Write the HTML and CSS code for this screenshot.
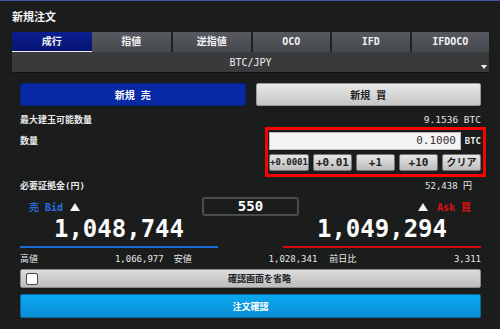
FILE: index.html
```html
<!DOCTYPE html>
<html lang="ja">
<head>
<meta charset="utf-8">
<title>新規注文</title>
<link rel="stylesheet" href="styles.css">
</head>
<body>
<div class="title">新規注文</div>
<div class="tabs">
  <div class="tab active">成行</div>
  <div class="tab">指値</div>
  <div class="tab sep">逆指値</div>
  <div class="tab sep">OCO</div>
  <div class="tab sep">IFD</div>
  <div class="tab sep">IFDOCO</div>
</div>
<div class="pair">BTC/JPY<span class="caret"></span></div>
<div class="panel">
  <div class="sides">
    <button class="btn-sell">新規 売</button>
    <button class="btn-buy">新規 買</button>
  </div>
  <div class="row r-max"><span class="lbl">最大建玉可能数量</span><span class="num">9.1536 BTC</span></div>
  <div class="qty-row">
    <span class="lbl qty-label">数量</span>
    <div class="qty-box">
      <div class="qty-input-row"><div class="qty-input">0.1000</div><span class="unit">BTC</span></div>
      <div class="qty-btns">
        <button class="sbtn tiny">+0.0001</button>
        <button class="sbtn">+0.01</button>
        <button class="sbtn">+1</button>
        <button class="sbtn">+10</button>
        <button class="sbtn clear">クリア</button>
      </div>
    </div>
  </div>
  <div class="row r-margin"><span class="lbl">必要証拠金(円)</span><span class="num pad">52,438 円</span></div>
  <div class="quote-head">
    <div class="bid-h"><span class="blue">売 Bid</span><span class="tri tri-b"></span></div>
    <div class="spread">550</div>
    <div class="ask-h"><span class="tri tri-a"></span><span class="red">Ask 買</span></div>
  </div>
  <div class="prices">
    <div class="price bid">1,048,744</div>
    <div class="price ask">1,049,294</div>
  </div>
  <div class="stats">
    <div class="stat"><span class="lbl">高値</span><span class="num">1,066,977</span></div>
    <div class="stat"><span class="lbl">安値</span><span class="num">1,028,341</span></div>
    <div class="stat last"><span class="lbl">前日比</span><span class="num">3,311</span></div>
  </div>
  <div class="skip"><span class="check"></span><span class="skip-label">確認画面を省略</span></div>
  <button class="confirm">注文確認</button>
</div>
</body>
</html>
```
FILE: styles.css
```css
* { box-sizing: border-box; }
html, body { margin: 0; padding: 0; }
body {
  width: 500px;
  height: 329px;
  overflow: hidden;
  background: #1b1c1c;
  border-top: 1px solid #3a5aa6;
  color: #e4e4e4;
  font-family: "DejaVu Sans Mono", "Noto Sans CJK JP", monospace;
  font-size: 9px;
}
button {
  font-family: inherit;
  margin: 0;
  padding: 0;
  cursor: pointer;
}
.title {
  height: 31px;
  padding: 3px 0 0 12px;
  line-height: 28px;
  font-size: 11px;
  font-weight: bold;
  color: #f4f4f4;
}
.tabs {
  margin-left: 12px;
  width: 477px;
  height: 20px;
  display: grid;
  grid-template-columns: repeat(6, 1fr);
}
.tab {
  background: linear-gradient(#56595f, #45484d);
  color: #f2f2f2;
  font-size: 10px;
  font-weight: bold;
  text-align: center;
  line-height: 20px;
}
.tab.sep { border-left: 2px solid #1f2022; }
.tab.active {
  background: linear-gradient(#0b1f8f, #071472);
  border-bottom: 2px solid #f0f0f0;
  line-height: 19px;
}
.pair {
  position: relative;
  margin-left: 12px;
  width: 477px;
  height: 21px;
  background: #393a3c;
  border-bottom: 1px solid #111;
  color: #f0f0f0;
  font-size: 10px;
  text-align: center;
  line-height: 21px;
}
.caret {
  position: absolute;
  right: 2px;
  bottom: 3px;
  width: 0;
  height: 0;
  border-left: 3.5px solid transparent;
  border-right: 3.5px solid transparent;
  border-top: 4px solid #f4f4f4;
}
.panel {
  padding: 10px 19px 0 20px;
  display: flex;
  flex-direction: column;
}
.sides {
  display: grid;
  grid-template-columns: 1fr 1fr;
  column-gap: 10px;
  height: 23px;
}
.btn-sell, .btn-buy {
  font-size: 10px;
  font-weight: bold;
  border-radius: 2px;
}
.btn-sell {
  background: #0829a6;
  border: 1px solid #0a1f7a;
  color: #fff;
}
.btn-buy {
  background: linear-gradient(#e8e8e8, #c6c6c6);
  border: 1px solid #9a9a9a;
  color: #222;
}
.row {
  display: flex;
  justify-content: space-between;
  line-height: 14px;
}
.lbl { font-weight: bold; color: #e8e8e8; }
.num { color: #e6e6e6; }
.r-max { margin-top: 7px; }
.r-max .num { font-size: 9.5px; }
.qty-row {
  display: flex;
  justify-content: space-between;
  align-items: flex-start;
}
.qty-label { margin-top: 7px; line-height: 14px; }
.qty-box {
  width: 221px;
  margin-right: -5px;
  border: 3px solid #f00;
  padding: 2px 2px 3px 1px;
}
.qty-input-row {
  display: flex;
  align-items: center;
  justify-content: space-between;
  height: 18px;
}
.qty-input {
  width: 192px;
  height: 18px;
  background: #f3f3f3;
  border: 1px solid #bbb;
  color: #333;
  font-size: 11px;
  line-height: 16px;
  text-align: right;
  padding-right: 4px;
}
.unit { font-size: 9px; font-weight: bold; color: #eee; }
.qty-btns {
  margin-top: 4px;
  display: grid;
  grid-template-columns: repeat(5, 1fr);
  column-gap: 4px;
  height: 17px;
}
.sbtn {
  background: linear-gradient(#e6e6e6, #bcbcbc);
  border: 1px solid #777;
  border-radius: 2px;
  color: #222;
  font-size: 11px;
  font-weight: bold;
  line-height: 15px;
  white-space: nowrap;
  overflow: visible;
}
.sbtn.tiny { font-size: 9px; }
.sbtn.clear { font-size: 10px; }
.r-margin { margin-top: 2px; }
.num.pad { padding-right: 9px; }
.quote-head {
  margin-top: 4px;
  height: 19px;
  display: grid;
  grid-template-columns: 1fr 97px 1fr;
  align-items: center;
  font-size: 10px;
  font-weight: bold;
}
.bid-h, .ask-h { display: flex; align-items: center; }
.bid-h { padding-left: 9px; }
.ask-h { justify-content: flex-end; padding-right: 10px; }
.blue { color: #2a6fe0; }
.red { color: #e01010; margin-left: 9px; }
.tri {
  display: inline-block;
  width: 0;
  height: 0;
  border-left: 5px solid transparent;
  border-right: 5px solid transparent;
  border-bottom: 8px solid #f4f4f4;
}
.tri-b { margin-left: 7px; }
.spread {
  height: 19px;
  border: 2px solid #4a4b4c;
  border-radius: 3px;
  background: #1b1c1c;
  color: #fff;
  font-size: 14px;
  font-weight: bold;
  text-align: center;
  line-height: 15px;
}
.prices {
  display: grid;
  grid-template-columns: 1fr 1fr;
  column-gap: 65px;
}
.price {
  height: 32px;
  line-height: 27px;
  padding-bottom: 3px;
  font-size: 24px;
  font-weight: bold;
  color: #fbfbfb;
  text-align: center;
}
.price.bid { border-bottom: 2px solid #1a6ad8; }
.price.ask { border-bottom: 2px solid #d40a0a; }
.stats {
  margin-top: 4px;
  display: grid;
  grid-template-columns: repeat(3, 1fr);
  line-height: 14px;
}
.stat {
  display: flex;
  justify-content: space-between;
  padding-right: 10px;
}
.stat.last { padding-right: 0; padding-left: 2px; }
.stat .lbl { font-weight: normal; }
.skip {
  margin-top: 3px;
  height: 19px;
  display: flex;
  align-items: center;
  padding-left: 5px;
  background: linear-gradient(#dcdcdc, #bdbdbd);
  border: 1px solid #8a8a8a;
  border-radius: 2px;
}
.check {
  width: 12px;
  height: 12px;
  background: #fff;
  border: 1px solid #444;
  border-radius: 2px;
}
.skip-label {
  flex: 1;
  text-align: center;
  color: #222;
  font-weight: bold;
  padding-left: 1px;
}
.confirm {
  margin-top: 6px;
  height: 24px;
  background: linear-gradient(#0aa8f0, #0a8cd4);
  border: 1px solid #0a6aa0;
  border-radius: 2px;
  color: #fff;
  font-size: 9px;
  font-weight: bold;
}
```
